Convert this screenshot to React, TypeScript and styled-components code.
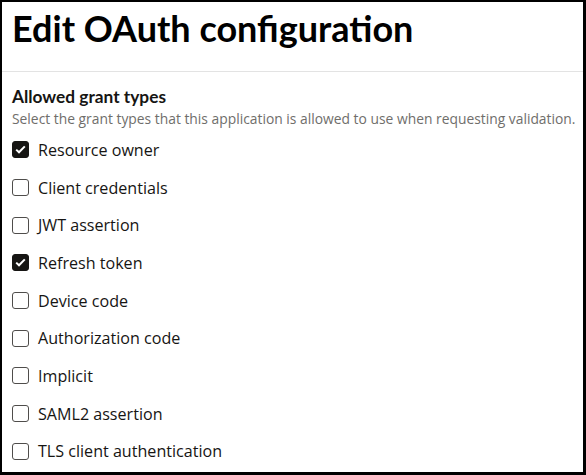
import styled, { createGlobalStyle } from "styled-components";

const GlobalStyle = createGlobalStyle`
  html, body {
    margin: 0;
    padding: 0;
    background: #fff;
  }
  * {
    box-sizing: border-box;
  }
`;

const Frame = styled.div`
  width: 586px;
  height: 475px;
  border-style: solid;
  border-color: #000;
  border-width: 2px 3px 3px 2px;
  background: #fff;
  font-family: Lato, "Open Sans", sans-serif;
  color: #161513;
  overflow: hidden;
`;

const Header = styled.header`
  height: 70px;
  padding: 4px 10px 0;
  border-bottom: 1px solid #e3e3e3;
`;

const Title = styled.h1`
  margin: 0;
  font-size: 36px;
  font-weight: 700;
  line-height: 44px;
  color: #000;
`;

const Body = styled.section`
  padding: 14px 10px 0;
`;

const GroupTitle = styled.h2`
  margin: 0;
  font-size: 17.3px;
  font-weight: 700;
  line-height: 22px;
`;

const Hint = styled.p`
  margin: 2px 0 0;
  font-family: "Open Sans", sans-serif;
  font-size: 13.85px;
  line-height: 18px;
  color: #6f6e6b;
  white-space: nowrap;
`;

const Options = styled.ul`
  list-style: none;
  margin: 3px 0 0;
  padding: 0;
  display: flex;
  flex-direction: column;
`;

const Option = styled.li`
  height: 37.7px;
  display: flex;
  align-items: center;
  gap: 9px;
`;

const Box = styled.span<{ $checked: boolean }>`
  width: 17px;
  height: 17px;
  border-radius: 3px;
  border: 1.5px solid ${(p) => (p.$checked ? "#161513" : "#4f4d4b")};
  background: ${(p) => (p.$checked ? "#161513" : "#fff")};
  display: flex;
  align-items: center;
  justify-content: center;
  flex-shrink: 0;
`;

const Label = styled.span`
  font-family: "Open Sans", sans-serif;
  font-size: 16.1px;
  color: #161513;
`;

const options: [string, boolean][] = [
  ["Resource owner", true],
  ["Client credentials", false],
  ["JWT assertion", false],
  ["Refresh token", true],
  ["Device code", false],
  ["Authorization code", false],
  ["Implicit", false],
  ["SAML2 assertion", false],
  ["TLS client authentication", false],
];

export default function App() {
  return (
    <>
      <GlobalStyle />
      <Frame>
        <Header>
          <Title>Edit OAuth configuration</Title>
        </Header>
        <Body>
          <GroupTitle>Allowed grant types</GroupTitle>
          <Hint>
            Select the grant types that this application is allowed to use when requesting validation.
          </Hint>
          <Options>
            {options.map(([label, checked]) => (
              <Option key={label}>
                <Box $checked={checked}>
                  {checked && (
                    <svg width="11" height="9" viewBox="0 0 11 9">
                      <path d="M1.2 4.6 L4 7.3 L9.8 1.4" fill="none" stroke="#fff" strokeWidth="2" />
                    </svg>
                  )}
                </Box>
                <Label>{label}</Label>
              </Option>
            ))}
          </Options>
        </Body>
      </Frame>
    </>
  );
}
